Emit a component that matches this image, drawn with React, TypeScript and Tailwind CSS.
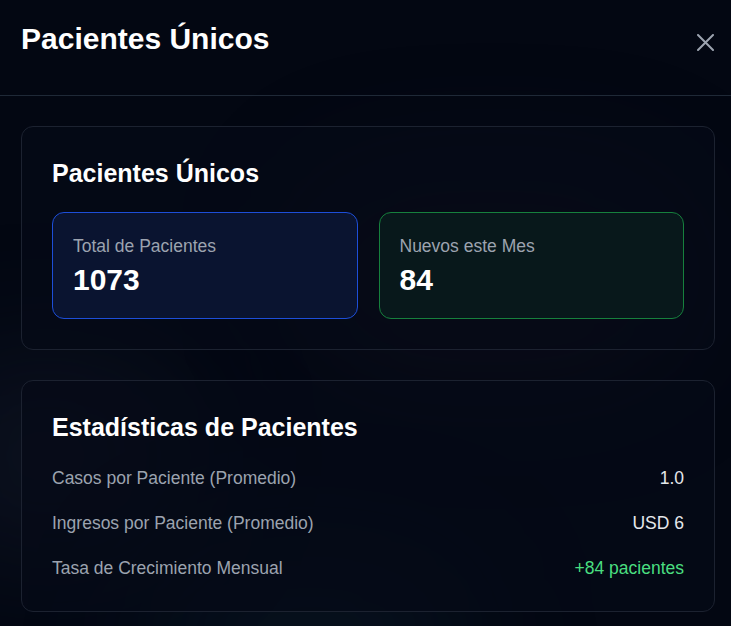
import type { FC } from "react";

const stats = [
	{ label: "Casos por Paciente (Promedio)", value: "1.0", accent: false },
	{ label: "Ingresos por Paciente (Promedio)", value: "USD 6", accent: false },
	{ label: "Tasa de Crecimiento Mensual", value: "+84 pacientes", accent: true },
];

const StatBox: FC<{ label: string; value: string; tone: "blue" | "green" }> = ({
	label,
	value,
	tone,
}) => (
	<div
		className={`rounded-xl border p-5 ${
			tone === "blue"
				? "border-[#1d4ed8] bg-[#0a1430]"
				: "border-[#16803d] bg-[#08181b]"
		}`}
	>
		<p className="mb-[3px] text-[17.5px] leading-[26px] text-[#9ca3af]">{label}</p>
		<p className="text-3xl font-bold text-white">{value}</p>
	</div>
);

export default function App() {
	return (
		<div
			className="relative h-[626px] w-full overflow-hidden bg-[#030712] text-white"
			style={{ fontFamily: '"Liberation Sans", Arial, sans-serif' }}
		>
			{/* faint glows behind the panels */}
			<div className="pointer-events-none absolute -left-24 top-[360px] h-48 w-72 rounded-full bg-[#1e293b]/30 blur-3xl" />
			<div className="pointer-events-none absolute left-[150px] top-[560px] h-40 w-80 rounded-full bg-[#0f2a3a]/30 blur-3xl" />
			<div className="pointer-events-none absolute left-[300px] top-[180px] h-48 w-96 rounded-full bg-[#1e1b2e]/25 blur-3xl" />

			<div className="relative">
				<header className="flex h-24 items-start justify-between border-b border-[#1f2937] pl-[21px] pr-[17px] pt-[21px]">
					<h1 className="text-3xl font-bold">Pacientes Únicos</h1>
					<button type="button" className="mt-[13px] text-[#9ca3af]">
						<svg width="17" height="17" viewBox="0 0 17 17" fill="none" stroke="currentColor" strokeWidth="2" strokeLinecap="round">
							<path d="M1 1l15 15M16 1L1 16" />
						</svg>
					</button>
				</header>

				<main className="flex flex-col gap-[30px] pb-[30px] pl-[21px] pr-[16px] pt-[30px]">
					<section className="rounded-xl border border-[#1c2230] bg-[#050a17]/70 p-[30px]">
						<h2 className="mb-[23px] text-[25px] font-bold leading-8">Pacientes Únicos</h2>
						<div className="grid grid-cols-2 gap-[21px]">
							<StatBox label="Total de Pacientes" value="1073" tone="blue" />
							<StatBox label="Nuevos este Mes" value="84" tone="green" />
						</div>
					</section>

					<section className="rounded-xl border border-[#1c2230] bg-[#050a17]/70 p-[30px]">
						<h2 className="mb-[22px] text-[25px] font-bold leading-8">Estadísticas de Pacientes</h2>
						<div className="flex flex-col gap-[19px]">
							{stats.map((s) => (
								<div
									key={s.label}
									className="flex items-center justify-between text-[17.5px] leading-[26px]"
								>
									<span className="text-[#9ca3af]">{s.label}</span>
									<span className={s.accent ? "text-[#4ade80]" : "text-[#e5e7eb]"}>
										{s.value}
									</span>
								</div>
							))}
						</div>
					</section>
				</main>
			</div>
		</div>
	);
}
